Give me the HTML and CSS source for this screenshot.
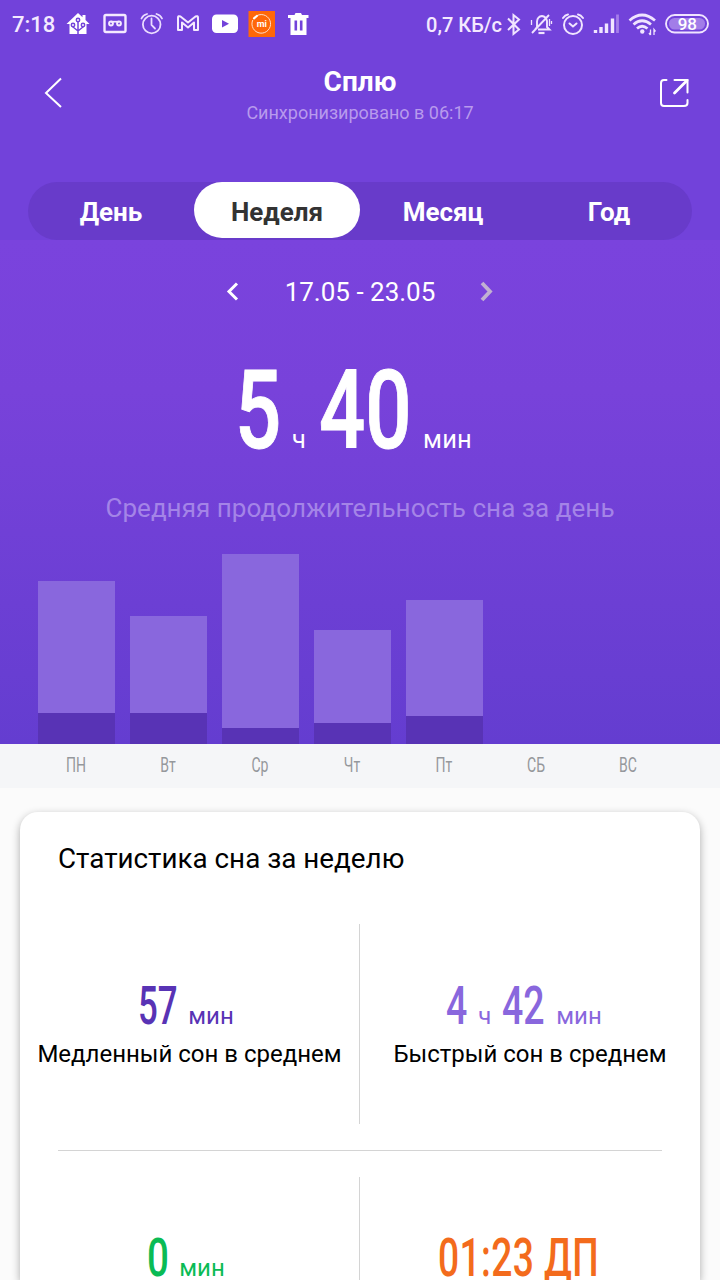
FILE: index.html
```html
<!DOCTYPE html>
<html lang="ru">
<head>
    <meta charset="UTF-8">
    <meta name="viewport" content="width=device-width, initial-scale=1.0">
    <title>Сплю</title>
    <link rel="stylesheet" href="styles.css">
</head>
<body>

    <!-- Header -->
    <div class="top">
        <div class="status-bar">
            <span class="clock">7:18</span>
            <svg class="icons-left" width="246" height="28" viewBox="64 10 246 28" fill="none">
                <!-- smart home -->
                <path d="M78 13L66.500 24H69.500V34H86.500V24H89.500L85.500 20V15H82.500V17.300Z" fill="#fff"/>
                <g stroke="#7242da" stroke-width="1.500">
                    <path d="M78 34V20M78 31L73 27V25M78 31L83 27V25"/>
                    <circle cx="78" cy="20" r="1.700" fill="#fff"/>
                    <circle cx="73" cy="25" r="1.700" fill="#fff"/>
                    <circle cx="83" cy="25" r="1.700" fill="#fff"/>
                </g>
                <!-- recorder -->
                <rect x="104.500" y="15" width="21" height="17" rx="1.500" stroke="#f4e9ff" stroke-width="2.400"/>
                <circle cx="111" cy="23.500" r="1.900" stroke="#f4e9ff" stroke-width="2"/>
                <circle cx="119" cy="23.500" r="1.900" stroke="#f4e9ff" stroke-width="2"/>
                <path d="M111 21.700H119" stroke="#f4e9ff" stroke-width="1.700"/>
                <!-- alarm -->
                <g stroke="#eadcff" stroke-width="1.800" stroke-linecap="round">
                    <circle cx="151.700" cy="24.500" r="8.800"/>
                    <path d="M151.500 18.500V25L155 28.500M141.500 18.500Q143 15 147 14M162 18.500Q160.500 15 156.500 14"/>
                </g>
                <!-- mail -->
                <path d="M178 30V17.500Q178 15.500 180.500 16.500L188 22.500L195.500 16.500Q198 15.500 198 17.500V30H194V22.500L188 27.500L182 22.500V30Z" stroke="#f4e9ff" stroke-width="2" stroke-linejoin="round"/>
                <!-- video -->
                <rect x="212" y="14.500" width="26" height="18.500" rx="4.500" fill="#fff"/>
                <path d="M222 20L229 23.700L222 27.400Z" fill="#7242da"/>
                <!-- fitness app -->
                <rect x="248.500" y="11" width="26.500" height="26" fill="#ff6709"/>
                <path d="M257 15.600A9.300 9.300 0 1 1 252.800 20" stroke="#ffe0cc" stroke-width="1"/>
                <path d="M254 18.300L256.800 16" stroke="#fff" stroke-width="2.200" stroke-linecap="round"/>
                <text x="261.800" y="26.500" text-anchor="middle" class="mi">mi</text>
                <!-- trash -->
                <path d="M288 15H294.500L295.500 13H301L302 15H308.500V18H306.500V35H290.500V18H288Z" fill="#fff"/>
                <path d="M295.800 20.500V30.500M301.200 20.500V30.500" stroke="#7242da" stroke-width="2.600"/>
            </svg>
            <span class="speed">0,7 КБ/с</span>
            <svg class="icons-right" width="206" height="28" viewBox="506 10 206 28" fill="none" stroke="#f0e4ff">
                <!-- bluetooth -->
                <path d="M508 18.500L519 29.500L513.500 34V15L519 19.500L508 30" stroke-width="2"/>
                <!-- muted bell -->
                <g stroke-width="1.900">
                    <path d="M535 29.500L537 27V21.500Q537.500 16.500 542 16Q546 16.500 547 21V27L549.500 29.500H538M532 33L549 15"/>
                    <path d="M538.500 33H544.500" stroke-width="2.200"/>
                    <path d="M531.500 20V25M549.500 19V26M551.500 21V24" stroke-width="1.300"/>
                </g>
                <!-- alarm -->
                <g stroke-width="2" stroke-linecap="round">
                    <circle cx="573" cy="25" r="9"/>
                    <path d="M569.500 23.500L573 26.500L576.500 23.500M563 18Q565 15 568 14.500M583 18Q581 15 578 14.500"/>
                </g>
                <!-- signal -->
                <path d="M595.500 33V30M601 33V27M606.500 33V23.500M612.500 33V18.500" stroke-width="3.400"/>
                <path d="M617.500 33V14.500" stroke="#a57eea" stroke-width="2.800"/>
                <!-- wi-fi -->
                <path d="M629.500 20.500Q642 9.500 655 20.500M633.500 24.500Q642 17 651 24.500M637 28.500Q642 24 647.500 28.500" stroke-width="2.700"/>
                <circle cx="642.300" cy="31.500" r="2.200" fill="#f0e4ff" stroke="none"/>
                <path d="M650.500 29.500V35M649 33L650.500 35M654 35V29.500L655.500 31.500" stroke-width="1.300"/>
                <!-- battery -->
                <rect x="666" y="15" width="42" height="17.500" rx="8.700" stroke-width="1.900"/>
                <rect x="669" y="18" width="36" height="11.500" rx="5.500" fill="#a27de8" stroke="none"/>
                <text x="687.300" y="30" text-anchor="middle" class="battery">98</text>
            </svg>
        </div>

        <div class="title-bar">
            <svg width="24" height="34" viewBox="0 0 24 34" fill="none" stroke="#fff" stroke-width="2">
                <path d="M18 2.500L3 17L18 31"/>
            </svg>
            <div class="titles">
                <h1>Сплю</h1>
                <p>Синхронизировано в 06:17</p>
            </div>
            <svg width="32" height="32" viewBox="0 0 32 32" fill="none" stroke="#fff" stroke-width="2" stroke-linecap="round">
                <path d="M8.500 3H6Q3 3 3 6V26Q3 29 6 29H26Q29.500 29 29.500 26V23M16.500 3H29.500V15.500"/>
                <path d="M29 3.500L16.500 16" stroke-width="2.800"/>
            </svg>
        </div>

        <div class="tabs">
            <a>День</a>
            <a class="active">Неделя</a>
            <a>Месяц</a>
            <a>Год</a>
        </div>
    </div>

    <!-- Average and chart -->
    <div class="summary">
        <div class="period">
            <svg width="14" height="22" viewBox="0 0 14 22" fill="none" stroke="#fff" stroke-width="3"><path d="M11 2.500L3 10.500L11 18.500"/></svg>
            <span>17.05 - 23.05</span>
            <svg width="14" height="22" viewBox="0 0 14 22" fill="none" stroke="#c1b1d2" stroke-width="3.800"><path d="M2 2L10 10.500L2 19"/></svg>
        </div>
        <div class="total">
            <span class="num one"><b>5</b></span><span class="unit">ч</span>
            <span class="num two"><b>40</b></span><span class="unit">мин</span>
        </div>
        <p class="caption">Средняя продолжительность сна за день</p>
        <div class="chart">
            <div class="bar" style="height: 163px"><i style="height: 31px"></i></div>
            <div class="bar" style="height: 128px"><i style="height: 31px"></i></div>
            <div class="bar" style="height: 190px"><i style="height: 16px"></i></div>
            <div class="bar" style="height: 114px"><i style="height: 21px"></i></div>
            <div class="bar" style="height: 144px"><i style="height: 28px"></i></div>
        </div>
    </div>

    <div class="days">
        <span>ПН</span>
        <span>Вт</span>
        <span>Ср</span>
        <span>Чт</span>
        <span>Пт</span>
        <span>СБ</span>
        <span>ВС</span>
    </div>

    <!-- Statistics -->
    <div class="card">
        <h2>Статистика сна за неделю</h2>
        <div class="stats">
            <div class="stat deep">
                <div class="value">
                    <span class="num two"><b>57</b></span><span class="unit">мин</span>
                </div>
                <p>Медленный сон в среднем</p>
            </div>
            <div class="stat light">
                <div class="value">
                    <span class="num one"><b>4</b></span><span class="unit">ч</span>
                    <span class="num two"><b>42</b></span><span class="unit">мин</span>
                </div>
                <p>Быстрый сон в среднем</p>
            </div>
        </div>
        <div class="line"></div>
        <div class="stats last">
            <div class="stat awake">
                <div class="value">
                    <span class="num one"><b>0</b></span><span class="unit">мин</span>
                </div>
            </div>
            <div class="stat asleep">
                <div class="value">
                    <span class="num time"><b>01:23 ДП</b></span>
                </div>
            </div>
        </div>
    </div>

</body>
</html>
```
FILE: styles.css
```css
* {
    box-sizing: border-box;
}
body {
    font-family: Roboto, sans-serif;
    margin: 0;
    height: 1280px;
    overflow: hidden;
    background-color: #fbfbfb;
}
h1, h2, p {
    margin: 0;
    font-weight: 400;
}
svg {
    display: block;
    flex-shrink: 0;
}
.top {
    height: 240px;
    background-color: #7242da;
    color: #fff;
}
.status-bar {
    display: flex;
    align-items: center;
    height: 48px;
    padding: 0 8px 0 12px;
    color: #f4e9ff;
    font-weight: 500;
}
.clock {
    width: 52px;
    font-size: 22px;
    line-height: 48px;
    padding-top: 2px;
}
.speed {
    margin-left: auto;
    margin-right: 4px;
    font-size: 20px;
    line-height: 48px;
    padding-top: 1px;
    white-space: nowrap;
}
.mi {
    font-size: 9px;
    font-weight: 700;
    fill: #fff;
}
.battery {
    font-size: 17px;
    font-weight: 500;
    fill: #fff;
    stroke: none;
}
.title-bar {
    display: flex;
    align-items: center;
    justify-content: space-between;
    height: 90px;
    padding: 0 30px 0 43px;
}
.titles {
    text-align: center;
    padding: 5px 5px 0 0;
}
.titles h1 {
    font-size: 28px;
    line-height: 34px;
    font-weight: 700;
}
.titles p {
    font-size: 18px;
    line-height: 27px;
    color: #b89aed;
}
.tabs {
    display: grid;
    grid-template-columns: repeat(4, 1fr);
    height: 58px;
    margin: 44px 28px 0;
    border-radius: 29px;
    background-color: #683bca;
}
.tabs a {
    height: 56px;
    line-height: 61px;
    border-radius: 28px;
    text-align: center;
    font-size: 26px;
    font-weight: 700;
}
.tabs .active {
    background-color: #fff;
    color: #333;
}
.summary {
    display: flex;
    flex-direction: column;
    height: 504px;
    background: linear-gradient(#7a43dd, #7842da 30%, #643dd0);
    color: #fff;
}
.period {
    display: flex;
    align-items: center;
    justify-content: space-between;
    width: 268px;
    height: 40px;
    margin: 32px auto 0;
    font-size: 26px;
}
.total, .value {
    display: flex;
    align-items: baseline;
    justify-content: center;
}
.total {
    justify-content: flex-start;
    height: 130px;
    margin-top: 34px;
    line-height: 130px;
    padding-left: 235px;
}
/* digits are squeezed to a condensed face */
.num {
    white-space: nowrap;
}
.num b {
    display: inline-block;
    font-weight: 500;
    transform: scaleX(0.74);
    transform-origin: left;
}
.total .num {
    font-size: 110px;
}
.total .num b {
    -webkit-text-stroke: 1px #fff;
}
.total .one {
    width: 57px;
}
.total .two {
    width: 104px;
    margin-left: 13px;
}
.total .unit {
    font-size: 25.5px;
    letter-spacing: 0.2px;
}
.caption {
    margin-top: 15px;
    text-align: center;
    font-size: 26px;
    line-height: 34px;
    letter-spacing: 0.05px;
    color: #a484e7;
}
.chart {
    display: flex;
    align-items: flex-end;
    gap: 15px;
    margin-top: auto;
    padding-left: 38px;
}
.bar {
    display: flex;
    align-items: flex-end;
    width: 77px;
    background-color: #8967dd;
}
.bar i {
    width: 100%;
    background-color: #5833b5;
}
.days {
    display: grid;
    grid-template-columns: repeat(7, 92px);
    height: 44px;
    padding-left: 30px;
    line-height: 44px;
    text-align: center;
    font-size: 19.5px;
    color: #95989c;
    background-color: #f5f6f8;
}
.days span {
    transform: scaleX(0.72);
}
.card {
    height: 468px;
    margin: 24px 20px 0;
    border-radius: 18px 18px 0 0;
    background-color: #fff;
    box-shadow: 0 3px 9px rgba(0, 0, 0, 0.32);
}
.card h2 {
    height: 112px;
    padding: 29px 38px 0;
    font-size: 27.8px;
    line-height: 36px;
}
.stats {
    display: grid;
    grid-template-columns: 1fr 1fr;
    height: 200px;
}
.stat {
    padding-top: 49px;
}
.last {
    height: 103px;
}
.last .stat {
    padding-top: 48px;
}
.stat:first-child {
    border-right: 1px solid #d4d4d4;
}
.value {
    height: 65px;
    line-height: 66px;
}
.last .value {
    height: 55px;
}
.value .num {
    font-size: 53.5px;
}
.value .num b {
    transform: scaleX(0.65);
}
.value .one {
    width: 32px;
}
.value .two {
    width: 50px;
}
.value .unit {
    font-size: 24px;
}
.deep .value {
    padding-right: 7px;
}
.light .value {
    padding-right: 12px;
}
.light .num b {
    transform: scaleX(0.7);
}
.light .two {
    width: 54px;
    margin-left: 11px;
}
.awake .value {
    padding-right: 7px;
}
.awake .num b {
    transform: scaleX(0.72);
}
.value .time {
    width: 184px;
}
.asleep .time b {
    letter-spacing: 0.6px;
    transform: scaleX(0.695);
}
.stat p {
    text-align: center;
    font-size: 24px;
    line-height: 32px;
    color: #000;
}
.deep {
    color: #5833b5;
}
.light {
    color: #8967dd;
}
.awake {
    color: #0abb55;
}
.asleep {
    color: #f36b1c;
}
.line {
    height: 1px;
    margin: 26px 38px;
    background-color: #d4d4d4;
}
```
